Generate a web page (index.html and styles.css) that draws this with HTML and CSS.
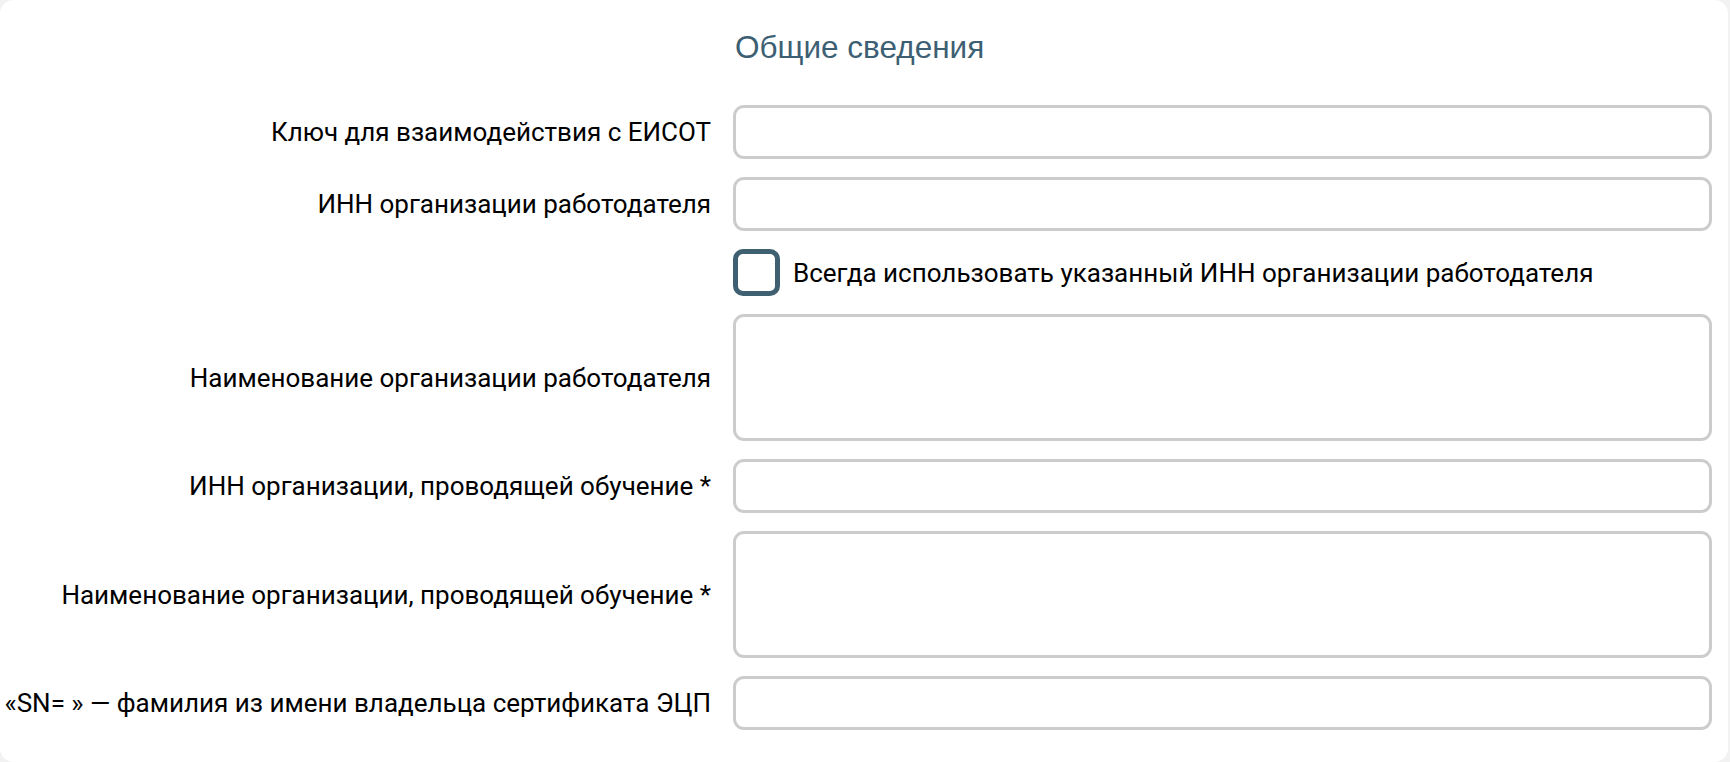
FILE: index.html
```html
<!DOCTYPE html>
<html lang="ru">
<head>
    <meta charset="UTF-8">
    <meta name="viewport" content="width=device-width, initial-scale=1.0">
    <title>Общие сведения</title>
    <link rel="stylesheet" href="styles.css">
</head>
<body>
    <div class="card">
        <form class="settings-form">
            <div class="spacer"></div>
            <h2 class="section-title">Общие сведения</h2>

            <label class="field-label" for="eisot_key">Ключ для взаимодействия с ЕИСОТ</label>
            <input class="field-input" type="text" id="eisot_key" name="eisot_key">

            <label class="field-label" for="employer_inn">ИНН организации работодателя</label>
            <input class="field-input" type="text" id="employer_inn" name="employer_inn">

            <div class="spacer"></div>
            <label class="check-row">
                <input type="checkbox" class="check-box" name="always_use_inn">
                <span>Всегда использовать указанный ИНН организации работодателя</span>
            </label>

            <label class="field-label" for="employer_name">Наименование организации работодателя</label>
            <textarea class="field-input field-area" id="employer_name" name="employer_name"></textarea>

            <label class="field-label" for="trainer_inn">ИНН организации, проводящей обучение *</label>
            <input class="field-input" type="text" id="trainer_inn" name="trainer_inn">

            <label class="field-label" for="trainer_name">Наименование организации, проводящей обучение *</label>
            <textarea class="field-input field-area" id="trainer_name" name="trainer_name"></textarea>

            <label class="field-label" for="cert_sn">«SN= » — фамилия из имени владельца сертификата ЭЦП</label>
            <input class="field-input" type="text" id="cert_sn" name="cert_sn">
        </form>
    </div>
</body>
</html>
```

FILE: styles.css
```css
body {
    margin: 0;
    background-color: #f2f2f2;
    font-family: Roboto, "Noto Sans", sans-serif;
    color: #000;
}

.card {
    width: 1728px;
    min-height: 762px;
    box-sizing: border-box;
    background-color: #fff;
    border-radius: 14px;
    padding: 30px 16px 20px 0;
}

.settings-form {
    display: grid;
    grid-template-columns: 711px 1fr;
    column-gap: 22px;
    row-gap: 18px;
    align-items: center;
}

.section-title {
    margin: 0 0 22px 2px;
    font-family: "Liberation Sans", Arial, sans-serif;
    font-weight: normal;
    font-size: 31.5px;
    line-height: 35px;
    color: #3d5f73;
}

.field-label {
    text-align: right;
    font-size: 26px;
    white-space: nowrap;
}

.field-input {
    box-sizing: border-box;
    height: 54px;
    width: 100%;
    margin: 0;
    border: 3px solid #cccccc;
    border-radius: 11px;
    background: #fff;
    font-family: inherit;
    font-size: 24px;
    padding: 0 12px;
    outline: none;
}

.field-area {
    height: 127px;
    resize: none;
    padding: 10px 12px;
}

.check-row {
    display: flex;
    align-items: center;
    gap: 13px;
    font-size: 26px;
}

.check-box {
    appearance: none;
    -webkit-appearance: none;
    margin: 0;
    width: 47px;
    height: 47px;
    box-sizing: border-box;
    border: 5px solid #3e6071;
    border-radius: 10px;
    background: #fff;
}
```
